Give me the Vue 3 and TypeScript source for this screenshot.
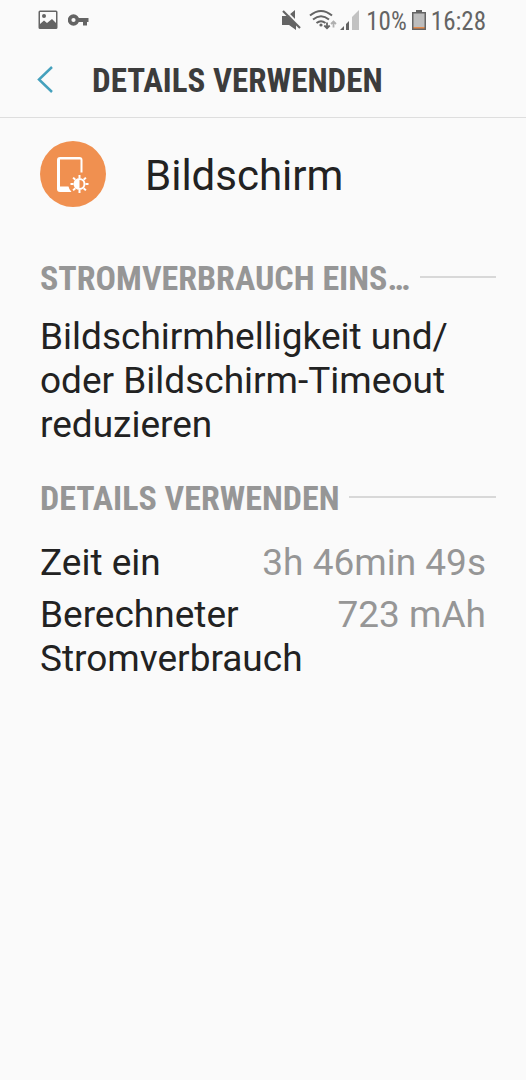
<script setup lang="ts">
interface UsageRow {
  label: string
  value: string
}

const rows: UsageRow[] = [
  { label: 'Zeit ein', value: '3h 46min 49s' },
  { label: 'Berechneter Stromverbrauch', value: '723 mAh' },
]
</script>

<template>
  <div class="screen">
    <div class="status">
      <div class="group left">
        <svg width="20" height="20" viewBox="0 0 20 20" aria-hidden="true">
          <path fill="#646464" fill-rule="evenodd" d="M2 0.500H18Q19.500 0.500 19.500 2V17.500Q19.500 19 18 19H2Q0.500 19 0.500 17.500V2Q0.500 0.500 2 0.500ZM2 2V14L6 10.500L9 13L14 9L18 13V2Z" />
          <circle cx="6" cy="6" r="2" fill="#646464" />
        </svg>
        <svg width="22" height="20" viewBox="0 0 22 20" aria-hidden="true">
          <circle cx="5.500" cy="10" r="3.900" fill="none" stroke="#646464" stroke-width="3.600" />
          <path fill="#646464" d="M10 8H20.500V12H19V15.500H15V12H10Z" />
        </svg>
      </div>
      <div class="group right">
        <svg width="84" height="24" viewBox="0 0 84 24" aria-hidden="true">
          <path fill="#646464" d="M5 8H10L19 16V22L12 17H5ZM12 7L18 2V12Z" />
          <path stroke="#fafafa" stroke-width="1.500" d="M8.300 2.300L24.300 18.300" />
          <path stroke="#646464" stroke-width="2.200" d="M6 3L23 20" />
          <g fill="none" stroke="#646464" stroke-width="2">
            <path d="M33 7.500Q44 -1.500 55 7.500M36 11.500Q44 5 52 11.500M39.500 15Q44 11.500 48.500 15" />
            <path d="M50 14.500V20M47.300 17.500L50 20.200L52.700 17.500" stroke-width="1.800" />
          </g>
          <circle cx="44" cy="17" r="1.600" fill="#646464" />
          <path d="M56.500 19.500V14M54 16L56.500 13.500L59 16" fill="none" stroke="#b0b0b0" stroke-width="1.800" />
          <path fill="#646464" d="M63 22L67 18V22ZM69 16L72 13V22H69Z" />
          <path fill="#c2c2c2" d="M75 9L82 2V22H75Z" />
        </svg>
        <span>10%</span>
        <svg width="14" height="20" viewBox="0 0 14 20" aria-hidden="true">
          <path fill="#646464" d="M4 0H10V2H14V20H0V2H4Z" />
          <path fill="#bdbdbd" d="M1.500 3.500H12.500V17H1.500Z" />
          <path fill="#e58b4d" d="M1.500 17H12.500V18.500H1.500Z" />
        </svg>
        <time>16:28</time>
      </div>
    </div>

    <header class="bar">
      <button type="button" class="back" aria-label="Zurück">
        <svg width="18" height="28" viewBox="0 0 18 28" aria-hidden="true">
          <path d="M16 2L3 14.500L16 27" fill="none" stroke="#45a1bd" stroke-width="2.500" />
        </svg>
      </button>
      <h1>DETAILS VERWENDEN</h1>
    </header>

    <main>
      <div class="app">
        <svg width="66" height="66" viewBox="0 0 66 66" aria-hidden="true">
          <circle cx="33" cy="33" r="33" fill="#f09050" />
          <path fill="#fff" fill-rule="evenodd" d="M20 16H39.500Q42.500 16 42.500 19V31.500H40.500V18.500H20V45.500H28.500Q29 48.500 31.500 51H20Q17 51 17 48V19Q17 16 20 16Z" />
          <g fill="none" stroke="#fff" stroke-width="2">
            <circle cx="39.500" cy="43" r="5" />
            <path d="M39.500 34V37M39.500 49V52M30.500 43H33.500M45.500 43H48.500M33.100 36.600L35.300 38.800M43.700 47.200L45.900 49.400M45.900 36.600L43.700 38.800M35.300 47.200L33.100 49.400" />
          </g>
          <path d="M39.500 38A5 5 0 0 0 39.500 48Z" fill="#fff" />
        </svg>
        <p class="name">Bildschirm</p>
      </div>

      <section>
        <h2><span>STROMVERBRAUCH EINS…</span></h2>
        <p class="advice">Bildschirmhelligkeit und/<wbr>oder Bildschirm-Timeout reduzieren</p>
      </section>

      <section class="usage">
        <h2><span>DETAILS VERWENDEN</span></h2>
        <dl>
          <div v-for="row in rows" :key="row.label" class="row">
            <dt>{{ row.label }}</dt>
            <dd>{{ row.value }}</dd>
          </div>
        </dl>
      </section>
    </main>
  </div>
</template>

<style>
body {
  margin: 0;
  background: #fafafa;
}
</style>

<style scoped>
.screen {
  min-height: 100vh;
  background: #fafafa;
  color: #222;
  font-family: Roboto, "Noto Sans", sans-serif;
}
.screen svg {
  display: block;
  flex: none;
}
h1, h2, p, dl, dd {
  margin: 0;
}
.status {
  display: flex;
  justify-content: space-between;
  align-items: center;
  height: 40px;
  padding: 0 40px 0 38px;
  color: #646464;
  font: 400 25px/38px "Roboto Condensed", Roboto, sans-serif;
}
.status span,
.status time {
  padding-top: 4px;
}
.group {
  display: flex;
  align-items: center;
}
.left {
  gap: 10px;
}
.right {
  gap: 5px;
}
.bar {
  display: flex;
  align-items: center;
  gap: 38px;
  height: 77px;
  padding: 0 30px 0 36px;
  border-bottom: 1px solid #dedede;
}
.back {
  padding: 0;
  border: 0;
  background: none;
  cursor: pointer;
}
h1 {
  padding-top: 4px;
  color: #3c3c3c;
  font: 700 33px/40px "Roboto Condensed", Roboto, sans-serif;
}
main {
  padding: 23px 30px 40px 40px;
}
.app {
  display: flex;
  align-items: center;
  gap: 39px;
}
.name {
  padding-top: 4px;
  font-size: 42px;
  line-height: 50px;
}
section {
  margin-top: 49px;
}
.usage {
  margin-top: 29px;
}
h2 {
  display: flex;
  align-items: center;
  gap: 10px;
  color: #969696;
  font: 700 34px/40px "Roboto Condensed", Roboto, sans-serif;
}
h2 span {
  padding-top: 2px;
  white-space: nowrap;
}
h2::after {
  content: "";
  flex: 1;
  height: 2px;
  background: #d8d8d8;
}
.advice {
  margin-top: 17px;
  font-size: 37px;
  line-height: 44px;
}
dl {
  display: grid;
  gap: 8px;
  margin-top: 23px;
  padding-right: 10px;
  font-size: 37px;
  line-height: 44px;
}
.row {
  display: flex;
  justify-content: space-between;
  gap: 20px;
}
dd {
  flex: none;
  color: #969696;
}
</style>
